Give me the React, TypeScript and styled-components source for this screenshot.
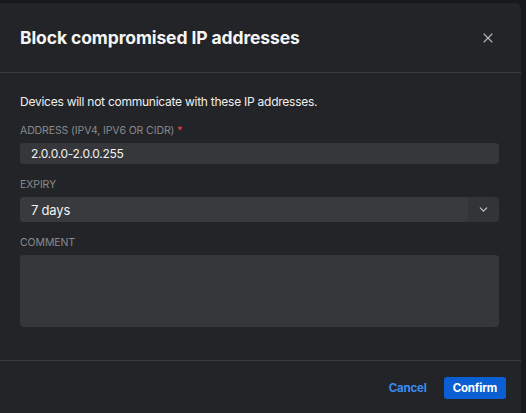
import styled, { createGlobalStyle } from "styled-components";
import { X, ChevronDown } from "lucide-react";

const GlobalStyle = createGlobalStyle`
  html, body {
    margin: 0;
    padding: 0;
    background: #18191b;
    font-family: "Inter", "Noto Sans", sans-serif;
    -webkit-font-smoothing: antialiased;
  }
`;

const Page = styled.div`
  height: 413px;
  overflow: hidden;
  padding: 3px 5px 0 0;
  box-sizing: border-box;
`;

const Dialog = styled.div`
  height: 420px;
  background: #232427;
  border-top-right-radius: 6px;
  display: flex;
  flex-direction: column;
  color: #f0f0f0;
`;

const Header = styled.div`
  height: 69px;
  display: flex;
  align-items: center;
  justify-content: space-between;
  padding: 0 25px 0 20px;
  border-bottom: 1px solid #3a3b3e;
`;

const Title = styled.h2`
  margin: 0;
  font-size: 17.5px;
  font-weight: 700;
  color: #f5f5f5;
  letter-spacing: -0.1px;
`;

const CloseButton = styled.button`
  background: none;
  border: none;
  padding: 0;
  color: #b9babd;
  display: flex;
  cursor: pointer;
`;

const Body = styled.div`
  padding: 21px 22px 33px 20px;
  display: flex;
  flex-direction: column;
  gap: 14px;
  border-bottom: 1px solid #3a3b3e;
`;

const Description = styled.p`
  margin: 0;
  font-size: 12px;
  line-height: 16px;
  letter-spacing: -0.25px;
  color: #f0f0f0;
`;

const Field = styled.div`
  display: flex;
  flex-direction: column;
  gap: 5px;
`;

const Label = styled.label`
  font-size: 10.5px;
  line-height: 14px;
  letter-spacing: -0.1px;
  color: #878a8f;
  text-transform: uppercase;
`;

const Required = styled.span`
  color: #e5484d;
  margin-left: 3px;
`;

const TextInput = styled.div`
  height: 21px;
  background: #36373a;
  border-radius: 4px;
  padding: 0 11px;
  display: flex;
  align-items: center;
  font-size: 12px;
  letter-spacing: -0.3px;
  color: #f2f2f2;
`;

const Select = styled.div`
  height: 25px;
  background: #333437;
  border-radius: 4px;
  display: flex;
`;

const SelectValue = styled.div`
  flex: 1;
  background: #393a3d;
  border-radius: 4px;
  padding: 0 11px;
  display: flex;
  align-items: center;
  font-size: 13px;
  letter-spacing: -0.2px;
  color: #f2f2f2;
`;

const SelectToggle = styled.div`
  width: 31px;
  display: flex;
  align-items: center;
  justify-content: center;
  color: #c4c5c8;
`;

const TextArea = styled.div`
  height: 72px;
  background: #36373a;
  border-radius: 4px;
`;

const Footer = styled.div`
  flex: 1;
  display: flex;
  align-items: flex-start;
  justify-content: flex-end;
  padding: 16px 15px 0 0;
  gap: 9px;
`;

const Button = styled.button<{ $primary?: boolean }>`
  height: 22px;
  border: none;
  border-radius: 3px;
  padding: 0 ${(p) => (p.$primary ? "9px" : "8px")};
  font-family: inherit;
  font-size: 11.5px;
  font-weight: 700;
  letter-spacing: -0.2px;
  background: ${(p) => (p.$primary ? "#0a5fd3" : "transparent")};
  color: ${(p) => (p.$primary ? "#ffffff" : "#3b8cf3")};
  cursor: pointer;
`;

export default function App() {
  return (
    <>
      <GlobalStyle />
      <Page>
        <Dialog>
          <Header>
            <Title>Block compromised IP addresses</Title>
            <CloseButton aria-label="Close">
              <X size={16} strokeWidth={1.6} />
            </CloseButton>
          </Header>

          <Body>
            <Description>
              Devices will not communicate with these IP addresses.
            </Description>

            <Field>
              <Label>
                Address (IPv4, IPv6 or CIDR)
                <Required>*</Required>
              </Label>
              <TextInput>2.0.0.0-2.0.0.255</TextInput>
            </Field>

            <Field>
              <Label>Expiry</Label>
              <Select>
                <SelectValue>7 days</SelectValue>
                <SelectToggle>
                  <ChevronDown size={13} strokeWidth={2.2} />
                </SelectToggle>
              </Select>
            </Field>

            <Field>
              <Label>Comment</Label>
              <TextArea />
            </Field>
          </Body>

          <Footer>
            <Button>Cancel</Button>
            <Button $primary>Confirm</Button>
          </Footer>
        </Dialog>
      </Page>
    </>
  );
}
